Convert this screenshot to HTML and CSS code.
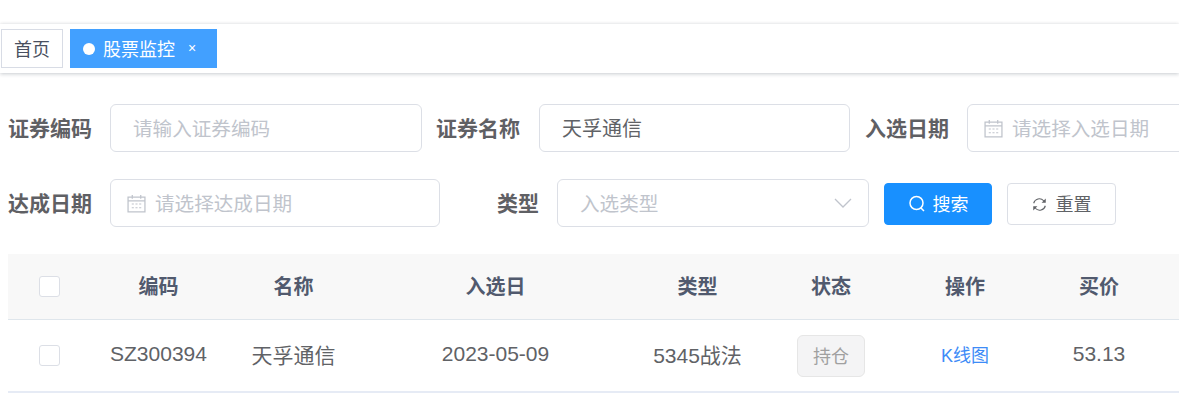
FILE: index.html
```html
<!DOCTYPE html>
<html>

<head>
  <meta charset="utf-8">
  <title>股票监控</title>
  <link rel="stylesheet" href="styles.css">
</head>

<body>

  <div class="tags-view">
    <a class="tag">首页</a>
    <a class="tag active"><i class="dot"></i>股票监控<span class="close">×</span></a>
  </div>

  <form class="search">
    <div class="row">
      <label class="lbl">证券编码</label>
      <div class="input w312"><span class="ph">请输入证券编码</span></div>
      <label class="lbl next">证券名称</label>
      <div class="input w311"><span class="val">天孚通信</span></div>
      <label class="lbl next2">入选日期</label>
      <div class="input date w330">
        <svg class="cal" viewBox="0 0 18 18"><path d="M1 3h16v14h-16zM1 6.500h16M5 1v3.500M13 1v3.500" /><path class="dots" d="M4.500 9.500h2M8 9.500h2M11.500 9.500h2M4.500 13h2M8 13h2M11.500 13h2" /></svg>
        <span class="ph">请选择入选日期</span>
      </div>
    </div>
    <div class="row second">
      <label class="lbl">达成日期</label>
      <div class="input date w330">
        <svg class="cal" viewBox="0 0 18 18"><path d="M1 3h16v14h-16zM1 6.500h16M5 1v3.500M13 1v3.500" /><path class="dots" d="M4.500 9.500h2M8 9.500h2M11.500 9.500h2M4.500 13h2M8 13h2M11.500 13h2" /></svg>
        <span class="ph">请选择达成日期</span>
      </div>
      <label class="lbl type">类型</label>
      <div class="input select w312">
        <span class="ph">入选类型</span>
        <svg class="arrow" viewBox="0 0 18 10"><path d="M1 1l8 8 8-8" /></svg>
      </div>
      <button class="btn primary" type="button">
        <svg viewBox="0 0 18 18"><circle cx="8.500" cy="8" r="6.500" /><path d="M13 13l3 3" /></svg>
        <span>搜索</span>
      </button>
      <button class="btn plain" type="button">
        <svg viewBox="0 0 18 18"><path d="M2 7.500a7 7 0 0 1 12-3l1 1.200M16 10.500a7 7 0 0 1-12 3l-1-1.200" /><path class="fill" d="M16.500 1.800v5h-5zM1.500 16.200v-5h5z" /></svg>
        <span>重置</span>
      </button>
    </div>
  </form>

  <table class="grid">
    <colgroup>
      <col class="c-check">
      <col class="c-code">
      <col class="c-name">
      <col class="c-date">
      <col class="c-type">
      <col class="c-std">
      <col class="c-std">
      <col class="c-std">
      <col>
    </colgroup>
    <thead>
      <tr>
        <th><span class="check"></span></th>
        <th>编码</th>
        <th>名称</th>
        <th>入选日</th>
        <th>类型</th>
        <th>状态</th>
        <th>操作</th>
        <th>买价</th>
        <th></th>
      </tr>
    </thead>
    <tbody>
      <tr>
        <td><span class="check"></span></td>
        <td>SZ300394</td>
        <td>天孚通信</td>
        <td>2023-05-09</td>
        <td>5345战法</td>
        <td><button class="state" type="button">持仓</button></td>
        <td><a class="link">K线图</a></td>
        <td>53.13</td>
        <td></td>
      </tr>
    </tbody>
  </table>

</body>

</html>
```

FILE: styles.css
```css
html {
  height: 100%;
}

body {
  margin: 0;
  width: 1179px;
  height: 410px;
  overflow: hidden;
  background: #fff;
  color: #606266;
  font-family: "Liberation Sans", "Noto Sans CJK SC", sans-serif;
}

.tags-view {
  display: flex;
  align-items: flex-start;
  gap: 7px;
  height: 49px;
  margin-top: 24px;
  padding: 5px 0 0 1px;
  box-sizing: border-box;
  background: #fff;
  box-shadow: 0 -1px 3px rgba(0, 0, 0, .03), 0 1px 4px rgba(0, 21, 41, .22);
}

.tag {
  display: flex;
  align-items: center;
  height: 39px;
  padding: 0 12px 2px 12px;
  box-sizing: border-box;
  border: 1px solid #d8dce5;
  color: #495060;
  font-size: 18px;
}

.tag.active {
  padding: 0 20px 2px 12px;
  border-color: #42a0ff;
  background: #42a0ff;
  color: #fff;
}

.dot {
  width: 12px;
  height: 12px;
  margin: 2px 8px 0 0;
  border-radius: 50%;
  background: #fff;
}

.close {
  margin-left: 13px;
  font-size: 14px;
}

.search {
  width: 1400px;
  padding: 31px 0 0 8px;
}

.row {
  display: flex;
  align-items: center;
  height: 48px;
}

.row.second {
  margin-top: 27px;
}

.lbl {
  width: 84px;
  margin-right: 18px;
  padding-bottom: 3px;
  color: #5f6064;
  font-size: 21px;
  font-weight: 700;
  white-space: nowrap;
}

.lbl.next {
  margin-left: 14px;
  margin-right: 19px;
}

.lbl.next2 {
  margin-left: 15px;
}

.lbl.type {
  width: 42px;
  margin-left: 57px;
}

.input {
  display: flex;
  align-items: center;
  height: 48px;
  padding: 0 0 2px 23px;
  box-sizing: border-box;
  border: 1px solid #dcdfe6;
  border-radius: 6px;
  background: #fff;
  font-size: 20px;
}

.w312 {
  width: 312px;
}

.w311 {
  width: 311px;
}

.w330 {
  width: 330px;
}

.ph {
  margin-left: -1px;
  color: #c0c4cc;
  font-size: 19.600px;
}

.val {
  margin-left: -1px;
  color: #606266;
}

.date {
  padding-left: 16px;
}

.cal {
  width: 19px;
  height: 19px;
  margin: 2px 10px 0 0;
  fill: none;
  stroke: #c0c4cc;
  stroke-width: 1.200;
}

.cal .dots {
  stroke-width: 1;
}

.select {
  justify-content: space-between;
  padding-right: 16px;
}

.arrow {
  width: 18px;
  height: 10px;
  margin-top: 2px;
  fill: none;
  stroke: #c0c4cc;
  stroke-width: 1.300;
}

.btn {
  display: flex;
  align-items: center;
  justify-content: center;
  height: 42px;
  margin-top: 2px;
  padding: 0;
  box-sizing: border-box;
  border-radius: 4px;
  font-family: inherit;
  font-size: 18px;
}

.btn span {
  padding-bottom: 2px;
}

.btn svg {
  width: 18px;
  height: 18px;
  margin-right: 7px;
  fill: none;
  stroke-width: 1.500;
}

.primary {
  width: 108px;
  margin-left: 15px;
  border: 1px solid #1890ff;
  background: #1890ff;
  color: #fff;
}

.primary svg {
  stroke: #fff;
}

.plain {
  width: 109px;
  margin-left: 15px;
  border: 1px solid #dcdfe6;
  background: #fff;
  color: #606266;
}

.plain svg {
  width: 15px;
  height: 15px;
  margin-right: 9px;
  stroke: #606266;
  stroke-width: 1.300;
}

.plain svg .fill {
  fill: #606266;
  stroke: none;
}

.grid {
  width: 1171px;
  margin: 27px 0 0 8px;
  table-layout: fixed;
  border-collapse: collapse;
  font-size: 21px;
}

.c-check {
  width: 82px;
}

.c-code {
  width: 137px;
}

.c-name {
  width: 133px;
}

.c-date {
  width: 271px;
}

.c-type {
  width: 133px;
}

.c-std {
  width: 134px;
}

.grid th {
  height: 65px;
  padding: 0 0 2px;
  box-sizing: border-box;
  background: #f8f8f8;
  border-bottom: 1px solid #dfe6ec;
  color: #515a6e;
  font-size: 20px;
  font-weight: 700;
  text-align: center;
}

.grid td {
  height: 73px;
  padding: 0 0 2px;
  box-sizing: border-box;
  border-bottom: 2px solid #e6ebf5;
  color: #606266;
  text-align: center;
}

.check {
  display: block;
  width: 21px;
  height: 21px;
  margin: 3px 0 0 31px;
  box-sizing: border-box;
  border: 1px solid #dcdfe6;
  border-radius: 3px;
  background: #fff;
}

.state {
  width: 68px;
  height: 42px;
  margin-top: 3px;
  padding: 0 0 2px;
  border: 1px solid #e6e6e6;
  border-radius: 6px;
  background: #f4f4f5;
  color: #a0a0a0;
  font-family: inherit;
  font-size: 18px;
}

.link {
  color: #3e8cf7;
  font-size: 18px;
}
```
